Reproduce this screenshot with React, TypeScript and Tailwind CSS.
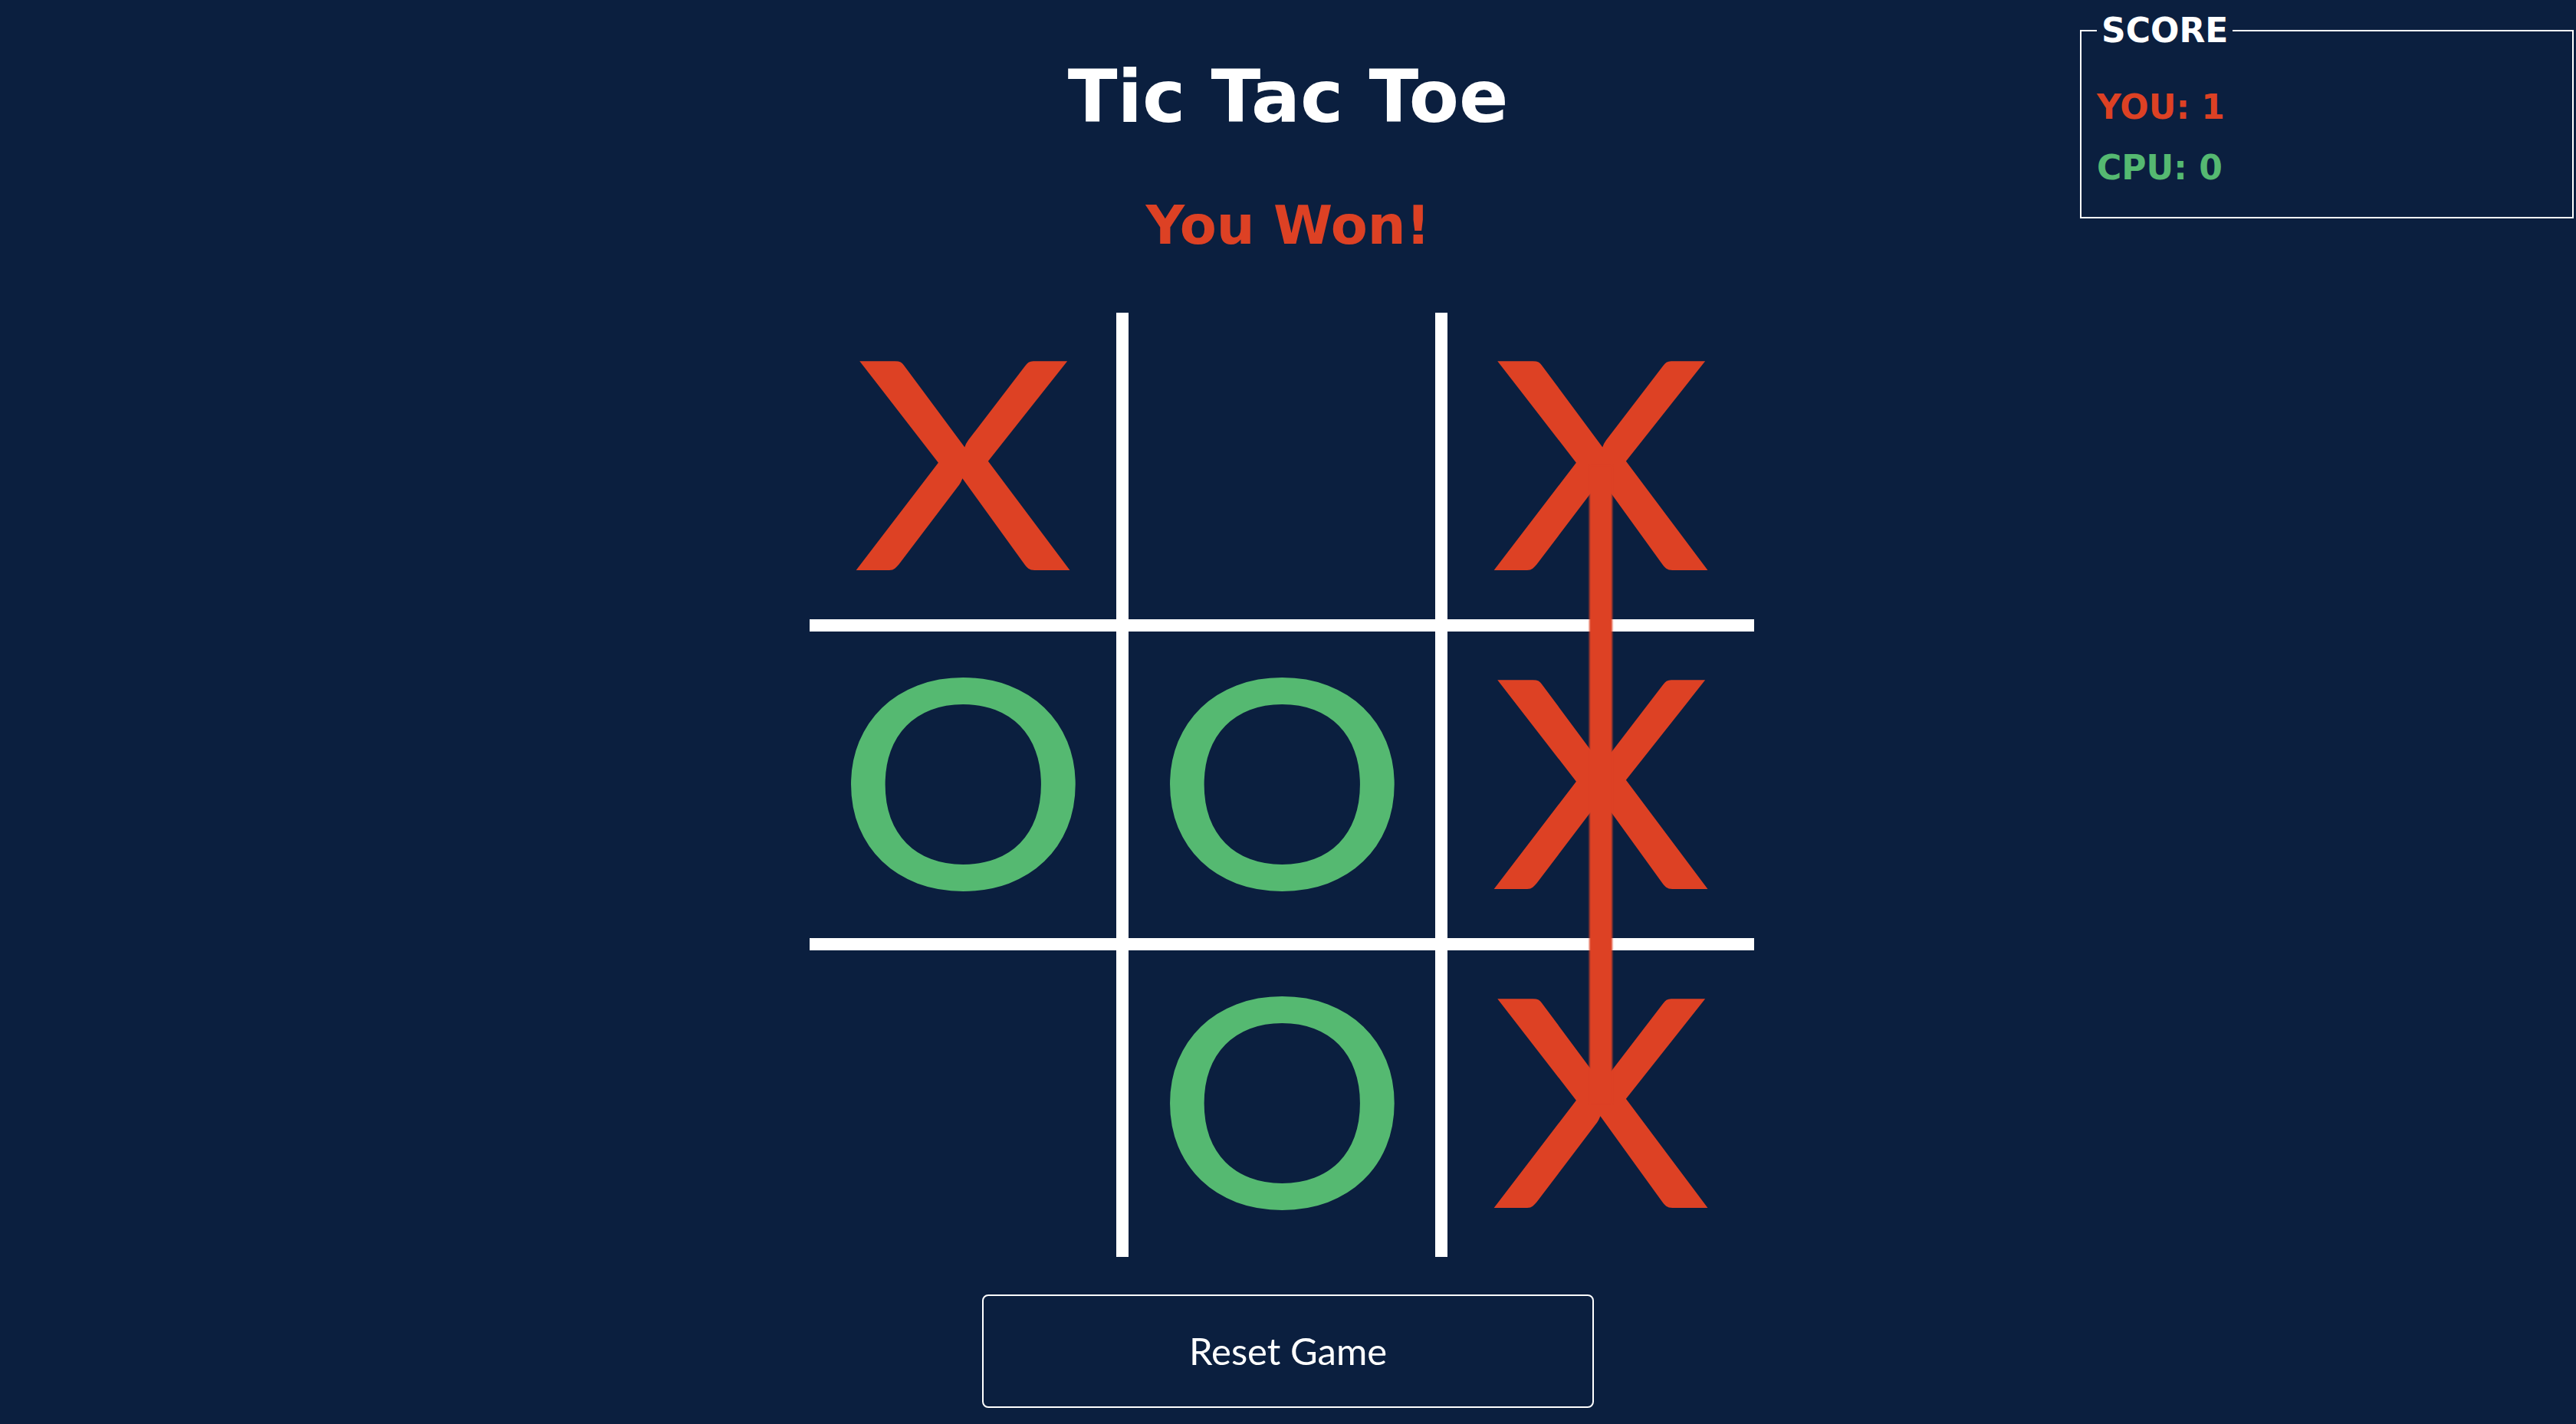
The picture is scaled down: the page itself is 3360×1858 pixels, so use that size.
import React from 'react';

type Mark = 'X' | 'O' | '';

const board: Mark[] = ['X', '', 'X', 'O', 'O', 'X', '', 'O', 'X'];

const Cell: React.FC<{ mark: Mark }> = ({ mark }) => (
  <div className="bg-[#0b1f3f] h-[400px] flex items-center justify-center pb-[22px]">
    {mark === 'X' && (
      <span className="font-['Lato',sans-serif] font-medium text-[380px] leading-none text-[#dd4124] scale-x-[1.15]">X</span>
    )}
    {mark === 'O' && (
      <span className="font-['Lato',sans-serif] font-medium text-[380px] leading-none text-[#55b971] scale-x-[1.08]">O</span>
    )}
  </div>
);

const App: React.FC = () => {
  return (
    <div className="min-h-screen w-full bg-[#0b1f3f] relative font-['DejaVu_Sans',sans-serif] text-white">
      <fieldset className="absolute top-[18px] right-[3px] w-[644px] h-[267px] border-2 border-white pl-[20px]">
        <legend className="px-[6px] text-[44px] font-bold leading-none">SCORE</legend>
        <p className="mt-[56px] text-[44px] font-bold leading-none text-[#dd4124]">YOU: 1</p>
        <p className="mt-[35px] text-[44px] font-bold leading-none text-[#55b971]">CPU: 0</p>
      </fieldset>

      <div className="flex flex-col items-center">
        <h1 className="mt-[79px] text-[95px] font-bold leading-none">Tic Tac Toe</h1>
        <h2 className="mt-[85px] text-[70px] font-bold leading-none text-[#dd4124]">You Won!</h2>

        <div className="mt-[79px] pr-4">
          <div className="relative grid grid-cols-[400px_400px_400px] gap-4 bg-white">
            {board.map((m, i) => (
              <Cell key={i} mark={m} />
            ))}
            <div className="absolute left-[1017px] top-[200px] w-[30px] h-[832px] bg-[#dd4124] blur-[1px]" />
          </div>
        </div>

        <button className="mt-[49px] w-[798px] h-[148px] border-2 border-white rounded-lg font-['Lato',sans-serif] text-[49px] text-white">
          Reset Game
        </button>
      </div>
    </div>
  );
};

export default App;
